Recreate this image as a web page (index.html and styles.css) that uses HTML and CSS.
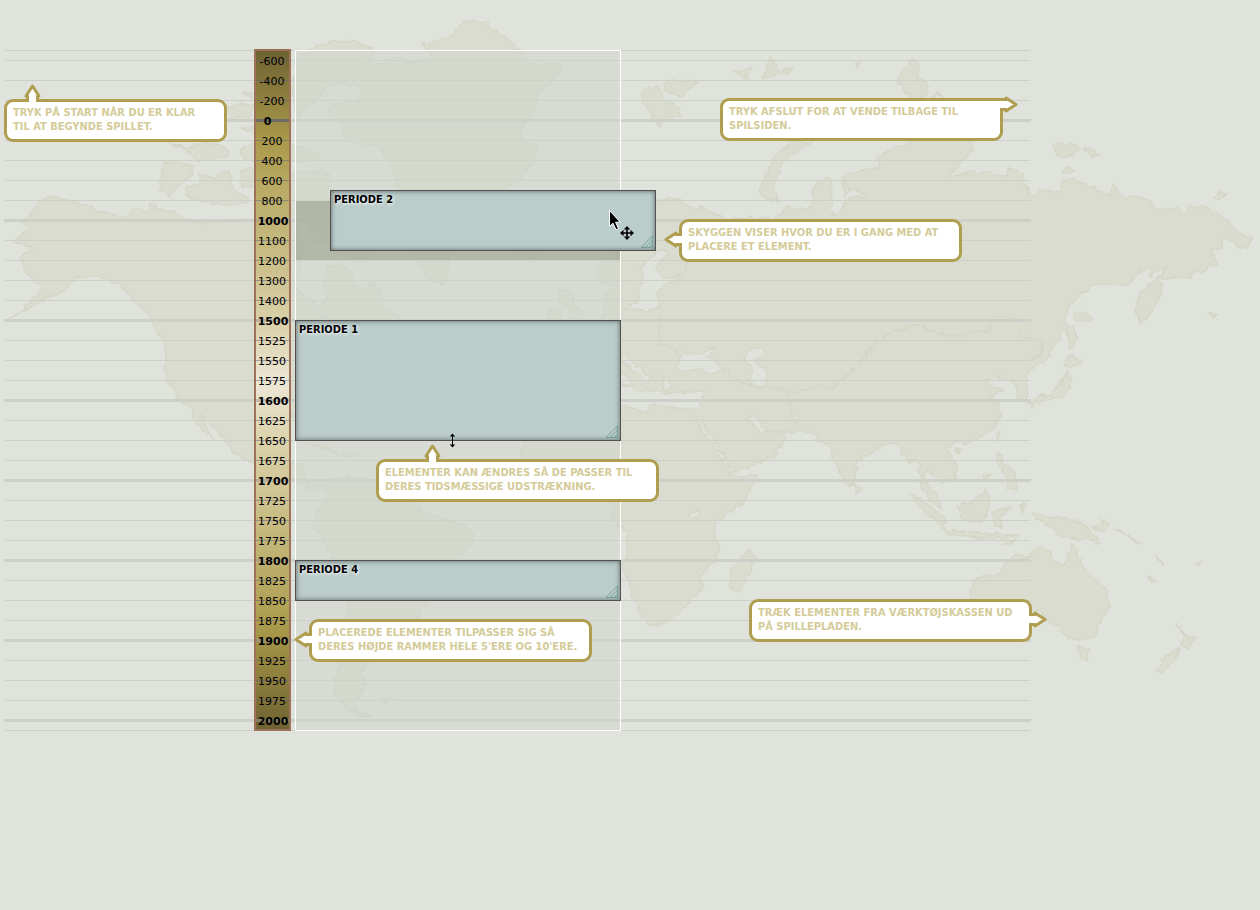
FILE: index.html
```
<!DOCTYPE html>
<html lang="da">
<head>
<meta charset="utf-8">
<title>Tidslinje</title>
<link rel="stylesheet" href="styles.css">
</head>
<body>
<svg class="map" viewBox="0 0 1260 910" aria-hidden="true">
  <defs>
    <filter id="coast" x="0" y="0" width="100%" height="100%">
      <feTurbulence type="fractalNoise" baseFrequency="0.13" numOctaves="2" seed="4" result="n"/>
      <feDisplacementMap in="SourceGraphic" in2="n" scale="7" xChannelSelector="R" yChannelSelector="G"/>
    </filter>
  </defs>
  <g filter="url(#coast)">
    <g class="land">
      <path d="M50 196L67 200L80 202L97 210L113 214L123 218L138 208L147 212L152 203L157 210L173 210L183 220L200 223L213 222L233 220L253 220L275 215L296 212L302 250L296 290L312 300L323 320L320 307L327 297L323 287L327 267L340 265L352 273L353 287L367 290L370 278L380 293L385 307L400 317L380 340L340 400L320 415L291 415L270 420L266 450L290 463L303 465L305 477L310 485L325 485L327 489L310 490L293 479L253 463L233 452L230 447L217 430L200 413L213 440L197 423L190 407L180 400L167 380L165 367L165 343L152 323L147 313L133 300L120 285L100 277L77 277L60 293L37 303L5 321L20 313L43 288L33 280L25 270L20 257L33 247L13 242L30 227L20 220L32 214L38 203Z"/>
      <path d="M328 478L350 477L367 480L400 485L417 503L420 512L443 518L467 527L474 533L472 543L460 558L450 580L427 603L417 618L395 640L370 663L360 673L367 683L357 700L355 710L373 717L360 718L343 707L333 690L337 673L340 663L347 617L348 603L345 580L330 553L323 540L313 527L317 510L328 500L327 488Z"/>
      <path d="M462 23L472 20L487 22L490 28L503 35L520 50L528 64L557 63L562 70L550 83L538 92L535 110L523 127L520 137L537 147L532 163L520 180L510 185L480 225L450 253L445 283L433 282L420 267L410 252L402 220L398 187L390 163L378 147L357 145L343 135L340 123L327 113L333 103L360 100L362 88L350 85L360 70L377 63L397 57L410 63L433 57L423 45L450 38Z"/>
      <path d="M313 47L330 42L350 41L372 48L373 57L357 73L347 83L327 87L313 103L297 117L292 90L296 60Z"/>
      <path d="M163 163L177 162L193 167L193 175L180 183L170 197L160 190Z"/>
      <path d="M200 173L215 178L222 172L230 170L233 190L247 197L247 203L213 205L187 197L187 187L200 184Z"/>
      <path d="M170 143L187 148L207 143L227 147L230 158L213 158L197 162L190 153Z"/>
      <path d="M228 108L240 103L253 106L250 118L230 117Z"/>
      <path d="M244 93L252 92L252 97Z"/>
      <path d="M240 150L252 143L275 150L290 145L318 152L319 160L270 163L245 160Z"/>
      <path d="M240 170L252 168L252 185L242 188Z"/>
      <path d="M270 178L297 173L323 170L332 180L325 200L345 208L375 250L360 263L340 255L320 235L300 220L280 205Z"/>
      <path d="M240 128L285 120L291 135L262 139Z"/>
      <path d="M517 253L530 248L543 253L530 260Z"/>
      <path d="M557 290L573 292L572 300L583 315L581 325L567 322L572 308L560 302ZM547 313L560 307L560 320L548 322Z"/>
      <path d="M597 267L615 253L635 225L655 203L667 197L680 200L690 207L700 207L713 212L727 220L735 222L733 217L760 218L773 220L787 207L807 210L813 203L812 190L820 180L830 178L833 197L830 213L840 215L850 190L840 177L860 170L880 168L877 157L902 145L925 135L973 142L973 150L960 163L948 177L973 172L990 172L1007 177L1008 168L1023 173L1027 190L1033 198L1040 190L1060 192L1062 180L1073 179L1087 185L1098 190L1108 197L1112 185L1123 197L1143 197L1152 203L1155 210L1177 208L1185 215L1188 205L1210 208L1227 220L1238 233L1253 238L1245 250L1223 238L1222 247L1212 250L1217 263L1187 278L1160 278L1163 293L1152 310L1140 325L1135 307L1140 293L1160 277L1167 265L1150 277L1150 268L1140 270L1128 285L1093 284L1067 308L1065 330L1043 363L1033 365L1025 380L1028 397L1017 398L1017 387L1010 380L1000 380L1000 375L987 382L993 388L1003 388L992 397L998 407L1002 415L992 430L980 438L965 443L953 443L947 450L958 467L955 477L943 483L937 477L927 470L923 480L937 493L940 508L928 500L920 483L922 477L917 460L907 462L897 443L882 445L857 463L855 483L848 487L840 473L828 445L817 440L813 432L787 432L767 430L753 415L747 417L760 433L775 430L787 438L777 453L760 463L733 472L727 460L702 423L695 417L702 430L717 450L733 477L757 475L753 487L743 502L717 522L715 533L720 547L718 558L700 575L703 587L693 597L680 613L667 622L650 625L642 617L633 597L628 577L622 570L627 550L627 533L613 520L613 503L600 495L560 500L530 480L522 455L524 443L560 410L560 350L590 330L606 312L604 298L612 285L598 283Z"/>
      <path d="M813 142L790 142L775 157L767 173L758 190L768 200L778 200L773 187L783 163L803 147Z"/>
      <path d="M643 90L655 86L660 87L665 103L675 103L682 117L663 117L660 128L650 113L643 102ZM667 80L697 82L680 97L665 90Z"/>
      <path d="M733 72L745 70L752 66L748 78ZM770 57L780 70L793 67L790 72L775 75L763 80L766 68ZM855 63L860 63L858 66Z"/>
      <path d="M913 58L920 67L918 78L925 82L927 92L925 98L910 98L897 80L902 70ZM933 95L938 91L942 97Z"/>
      <path d="M1053 145L1066 143L1080 147L1073 155L1057 157ZM1085 148L1100 155L1090 156ZM1063 172L1068 167L1075 172ZM1213 197L1220 192L1227 194L1218 199Z"/>
      <path d="M1067 325L1071 325L1078 337L1072 350L1069 348ZM1072 313L1086 312L1093 320L1076 321ZM1208 312L1218 315L1213 316Z"/>
      <path d="M1070 355L1082 362L1073 367L1065 366ZM1067 370L1072 380L1065 395L1040 402L1033 400L1053 392L1062 383ZM1027 402L1034 402L1033 409Z"/>
      <path d="M995 435L999 431L997 441ZM955 450L962 448L960 453ZM997 453L1003 455L1002 463L1008 468L1015 473L1017 490L1008 487L1003 470L997 464ZM982 475L992 473L985 479ZM855 483L862 490L857 493Z"/>
      <path d="M958 507L973 502L985 490L990 497L988 510L982 522L962 520ZM908 493L922 500L947 520L943 528L927 513ZM943 530L973 532L1020 536L987 539L950 534ZM993 512L1012 507L1000 516L1003 527L995 527ZM1020 508L1024 503L1023 514ZM1005 543L1018 538L1010 544Z"/>
      <path d="M1032 513L1043 513L1047 520L1060 517L1087 525L1090 533L1103 543L1073 538L1057 535L1053 527L1037 520ZM1093 528L1106 522L1100 517L1109 524L1103 531ZM1113 528L1128 535L1141 544L1130 537ZM1156 555L1163 563L1161 567ZM1148 574L1157 581L1151 581ZM1193 567L1203 561L1198 567Z"/>
      <path d="M973 580L1000 572L1005 563L1017 555L1027 557L1038 547L1052 550L1050 558L1065 567L1072 543L1080 560L1087 572L1107 590L1109 607L1098 627L1097 635L1087 640L1067 638L1058 625L1053 627L1047 620L1040 612L1010 615L980 630L976 605L970 592Z"/>
      <path d="M1078 647L1090 648L1087 660L1082 659ZM1177 623L1184 634L1195 638L1187 650L1182 645L1183 637ZM1180 647L1174 662L1163 672L1155 670L1170 653Z"/>
      <path d="M750 548L755 560L740 592L732 590L729 583L732 568Z"/>
      <path d="M308 444L325 444L336 453L318 447ZM342 453L358 454L352 457L343 456ZM383 698L394 699L386 703Z"/>
    </g>
    <g class="water">
      <path d="M660 249L640 267L643 277L637 303L623 309L650 312L660 307L657 293L667 283L683 278L663 278L655 268L668 253Z"/>
      <path d="M677 367L683 352L700 355L715 347L707 357L725 370L713 373L697 369L680 372Z"/>
      <path d="M743 358L752 349L763 348L764 354L755 360L767 372L765 388L750 383L752 370Z"/>
      <path d="M612 383L640 391L652 391L672 393L703 391L700 410L677 408L650 404L647 412L612 403Z"/>
      <path d="M663 376L668 378L672 390L665 390ZM622 353L633 362L650 378L648 383L640 375L622 362ZM620 372L632 380L634 386L620 384Z"/>
      <path d="M690 512L698 511L697 518L689 518Z"/>
      <path d="M843 180L846 195L855 188L868 200L855 195L845 202Z"/>
    </g>
    <g class="borders">
      <path d="M790 393L813 387L833 388L860 363L877 340L900 330L922 324L930 331L953 337L990 330L997 317L1013 317L1022 337L1043 342L1040 355L1030 362"/>
      <path d="M660 312L661 325L657 343L672 347L680 357M725 370L740 382L760 388L783 387L790 400L792 420L800 428M690 252L685 270L675 277"/>
    </g>
  </g>
</svg>

<main class="board">
  <ol class="scale">
    <li><span>-600</span></li>
    <li><span>-400</span></li>
    <li><span>-200</span></li>
    <li class="major zero"><span>0</span></li>
    <li><span>200</span></li>
    <li><span>400</span></li>
    <li><span>600</span></li>
    <li><span>800</span></li>
    <li class="major"><span>1000</span></li>
    <li><span>1100</span></li>
    <li><span>1200</span></li>
    <li><span>1300</span></li>
    <li><span>1400</span></li>
    <li class="major"><span>1500</span></li>
    <li><span>1525</span></li>
    <li><span>1550</span></li>
    <li><span>1575</span></li>
    <li class="major"><span>1600</span></li>
    <li><span>1625</span></li>
    <li><span>1650</span></li>
    <li><span>1675</span></li>
    <li class="major"><span>1700</span></li>
    <li><span>1725</span></li>
    <li><span>1750</span></li>
    <li><span>1775</span></li>
    <li class="major"><span>1800</span></li>
    <li><span>1825</span></li>
    <li><span>1850</span></li>
    <li><span>1875</span></li>
    <li class="major"><span>1900</span></li>
    <li><span>1925</span></li>
    <li><span>1950</span></li>
    <li><span>1975</span></li>
    <li class="major"><span>2000</span></li>
  </ol>
  <div class="axis"></div>
  <div class="track"></div>
  <div class="drop-shadow"></div>

  <section class="period period-2"><h2>PERIODE 2</h2>
    <svg class="grip" viewBox="0 0 12 12"><path d="M0 11.500H11.500V0M0 11.500L11.500 0M4 11.500L11.500 4M8 11.500L11.500 8"/></svg></section>
  <section class="period period-1"><h2>PERIODE 1</h2>
    <svg class="grip" viewBox="0 0 12 12"><path d="M0 11.500H11.500V0M0 11.500L11.500 0M4 11.500L11.500 4M8 11.500L11.500 8"/></svg></section>
  <section class="period period-4"><h2>PERIODE 4</h2>
    <svg class="grip" viewBox="0 0 12 12"><path d="M0 11.500H11.500V0M0 11.500L11.500 0M4 11.500L11.500 4M8 11.500L11.500 8"/></svg></section>

  <p class="callout start">TRYK PÅ START NÅR DU ER KLAR<br>TIL AT BEGYNDE SPILLET.
    <svg class="tip up" viewBox="0 0 21 19"><path d="M5.500 19V13H4L10.500 3L17 13H15.500V19"/></svg></p>
  <p class="callout finish">TRYK AFSLUT FOR AT VENDE TILBAGE TIL<br>SPILSIDEN.
    <svg class="tip right" viewBox="0 0 19 21"><path d="M0 5.500H6V4L16 10.500L6 17V15.500H0"/></svg></p>
  <p class="callout shade">SKYGGEN VISER HVOR DU ER I GANG MED AT<br>PLACERE ET ELEMENT.
    <svg class="tip left" viewBox="0 0 19 21"><path d="M19 5.500H13V4L3 10.500L13 17V15.500H19"/></svg></p>
  <p class="callout resize">ELEMENTER KAN ÆNDRES SÅ DE PASSER TIL<br>DERES TIDSMÆSSIGE UDSTRÆKNING.
    <svg class="tip up" viewBox="0 0 21 19"><path d="M5.500 19V13H4L10.500 3L17 13H15.500V19"/></svg></p>
  <p class="callout snap">PLACEREDE ELEMENTER TILPASSER SIG SÅ<br>DERES HØJDE RAMMER HELE 5'ERE OG 10'ERE.
    <svg class="tip left" viewBox="0 0 19 21"><path d="M19 5.500H13V4L3 10.500L13 17V15.500H19"/></svg></p>
  <p class="callout drag">TRÆK ELEMENTER FRA VÆRKTØJSKASSEN UD<br>PÅ SPILLEPLADEN.
    <svg class="tip right" viewBox="0 0 19 21"><path d="M0 5.500H6V4L16 10.500L6 17V15.500H0"/></svg></p>

  <svg class="cursor move" viewBox="0 0 28 32">
    <path class="pointer" d="M1.500 1.500V17.500L5 14.200L8 20.800L10.500 19.700L7.600 13.200H12.300Z"/>
    <path d="M12 24L15.500 20.800V23.200H18.200V20.500H15.800L19 17L22.200 20.500H19.800V23.200H22.500V20.800L26 24L22.500 27.200V24.800H19.800V27.500H22.200L19 31L15.800 27.500H18.200V24.800H15.500V27.200Z"/>
  </svg>
  <svg class="cursor stretch" viewBox="0 0 9 15"><path d="M4.500 0.500L7.200 3.500H5V11.500H7.200L4.500 14.500L1.800 11.500H4V3.500H1.800Z"/></svg>
</main>
</body>
</html>
```
FILE: styles.css
```
* { box-sizing: border-box; }
body {
  margin: 0;
  min-height: 100vh;
  background: #e0e3dc;
  color: #000;
  font-family: "DejaVu Sans", Verdana, sans-serif;
  font-size: 11px;
}
.map {
  position: absolute;
  top: 0;
  left: 0;
  width: 100%;
  z-index: -1;
}
.land { fill: #dadccf; stroke: #d4d7c8; stroke-width: 1.5; stroke-linejoin: round; }
.water { fill: #e0e3dc; stroke: #d4d7c8; stroke-width: 1.5; }
.borders { fill: none; stroke: #d2d5c7; stroke-width: 1.5; }

.board {
  position: relative;
  margin: 50px 230px 0 5px;
  border: solid #cdd0c8;
  border-width: 1px 0;
}
.scale {
  position: relative;
  margin: 0;
  padding: 0;
  list-style: none;
}
.scale li {
  height: 20px;
  padding-left: 250px;
  background: linear-gradient(#cdd0c8, #cdd0c8) 0 9px / 100% 1px no-repeat;
}
.scale li:last-child { height: 19px; }
.scale span {
  position: relative;
  z-index: 3;
  display: block;
  width: 35px;
  padding-right: 1px;
  line-height: 21px;
  text-align: center;
}
.scale .major {
  margin: 0 -1px;
  padding-left: 252px;
  background-position: 0 8px;
  background-size: 100% 3px;
  font-weight: bold;
}
.scale .zero span { padding-right: 12px; }
.axis {
  position: absolute;
  z-index: 1;
  top: -2px;
  bottom: -1px;
  left: 249px;
  width: 37px;
  border: 2px solid #9c7358;
  background: linear-gradient(#6e6232, #aa994a 13%, #b9aa64 20%, #cabe88 31%, #ded5b2 42%, #ece6d6 49%, #e0d8b6 55%, #cabe88 68%, #b0a052 83%, #9b8b42 89%, #6e6232);
}
.scale span::before {
  content: "";
  position: absolute;
  z-index: -1;
  top: 9px;
  left: 1px;
  width: 33px;
  height: 1px;
  background: rgba(90, 98, 140, 0.5);
}
.scale .major span::before { top: 8px; left: 0; height: 3px; background: rgba(150, 150, 155, 0.5); }
.scale .zero span::before { background: #6d6b66; }
.track {
  position: absolute;
  top: -1px;
  bottom: -1px;
  left: 290px;
  width: 326px;
  border: 1px solid #fff;
  background: rgba(208, 211, 204, 0.5);
}
.drop-shadow {
  position: absolute;
  top: 150px;
  left: 291px;
  width: 324px;
  height: 59px;
  background: rgba(144, 149, 126, 0.5);
}
.period {
  position: absolute;
  z-index: 2;
  left: 290px;
  width: 326px;
  border: 1px solid #555050;
  background: #bbcdca;
  box-shadow: inset 0 0 5px rgba(50, 55, 55, 0.7);
}
.period h2 {
  margin: 0;
  padding: 2px 3px;
  font: bold 11px/14px "DejaVu Sans Condensed", "DejaVu Sans", sans-serif;
  text-shadow: 1px 1px 3px #fff;
}
.period-2 { top: 139px; left: 325px; height: 61px; }
.period-1 { top: 269px; height: 121px; }
.period-4 { top: 509px; height: 41px; }
.grip {
  position: absolute;
  right: 2px;
  bottom: 2px;
  width: 12px;
  height: 12px;
  fill: none;
  stroke: #74a09b;
}
.callout {
  position: absolute;
  z-index: 4;
  min-width: 283px;
  margin: 0;
  padding: 4px 6px 5px;
  border: 3px solid #b09e50;
  border-radius: 9px;
  background: #fff;
  color: #d4cb98;
  font: bold 11px/14px "DejaVu Sans Condensed", "DejaVu Sans", sans-serif;
  white-space: nowrap;
}
.start { top: 48px; left: -1px; min-width: 223px; }
.finish { top: 47px; left: 715px; border-top-right-radius: 0; }
.shade { top: 168px; left: 674px; }
.resize { top: 408px; left: 371px; }
.snap { top: 568px; left: 304px; }
.drag { top: 548px; left: 744px; }
.tip { position: absolute; fill: #fff; stroke: #b09e50; stroke-width: 3; stroke-linejoin: round; }
.up { top: -19px; left: 15px; width: 21px; height: 19px; }
.resize .up { left: 43px; }
.left { top: 7px; left: -19px; width: 19px; height: 21px; }
.right { top: 7px; right: -19px; width: 19px; height: 21px; }
.finish .right { top: -7px; }
.cursor { position: absolute; z-index: 5; }
.pointer { stroke: #fff; }
.move { top: 158px; left: 603px; width: 28px; height: 32px; }
.stretch { top: 382px; left: 443px; width: 9px; height: 15px; }
```
